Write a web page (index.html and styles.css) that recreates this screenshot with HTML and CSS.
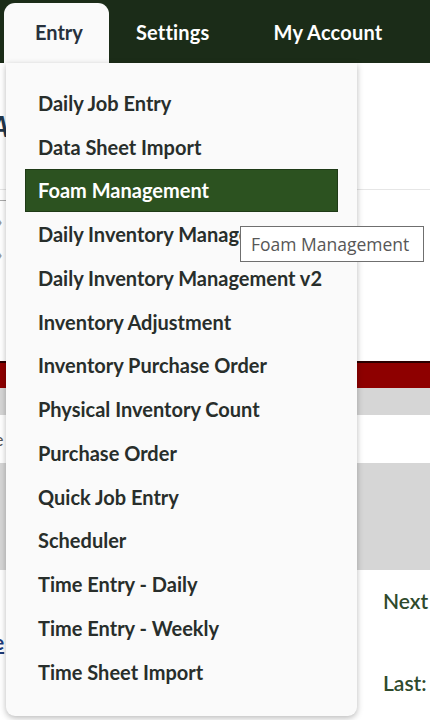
FILE: index.html
```html
<!DOCTYPE html>
<html lang="en">
<head>
    <meta charset="UTF-8">
    <meta name="viewport" content="width=device-width, initial-scale=1.0">
    <title>Entry - Foam Management</title>
    <link rel="stylesheet" href="styles.css">
</head>
<body>
    <nav class="topnav">
        <a href="#" class="tab active">Entry</a>
        <a href="#" class="tab">Settings</a>
        <a href="#" class="tab">My Account</a>
    </nav>

    <div class="page">
        <div class="page-head">
            <h2 class="page-title">A</h2>
        </div>
        <div class="filters">
            <span class="rule"></span>
            <span class="chev">&#8250;</span>
            <span class="chev">&#8250;</span>
        </div>
        <div class="band-red"></div>
        <div class="band-gray"></div>
        <div class="row-white"><span class="cut">e</span></div>
        <div class="band-gray tall"></div>
        <div class="summary">
            <div class="summary-row">Next</div>
            <div class="summary-row"><a href="#" class="cut-link">e</a></div>
            <div class="summary-row">Last:</div>
        </div>
    </div>

    <!-- dropdown for the Entry tab -->
    <ul class="dropdown">
        <li><a href="#">Daily Job Entry</a></li>
        <li><a href="#">Data Sheet Import</a></li>
        <li><a href="#" class="hover">Foam Management</a></li>
        <li><a href="#">Daily Inventory Management</a></li>
        <li><a href="#">Daily Inventory Management v2</a></li>
        <li><a href="#">Inventory Adjustment</a></li>
        <li><a href="#">Inventory Purchase Order</a></li>
        <li><a href="#">Physical Inventory Count</a></li>
        <li><a href="#">Purchase Order</a></li>
        <li><a href="#">Quick Job Entry</a></li>
        <li><a href="#">Scheduler</a></li>
        <li><a href="#">Time Entry - Daily</a></li>
        <li><a href="#">Time Entry - Weekly</a></li>
        <li><a href="#">Time Sheet Import</a></li>
    </ul>

    <div class="tooltip">Foam Management</div>
</body>
</html>
```

FILE: styles.css
```css
* {
    box-sizing: border-box;
}
body {
    margin: 0;
    font-family: Lato, "Open Sans", sans-serif;
    background-color: #fff;
    width: 430px;
    height: 720px;
    overflow: hidden;
    position: relative;
}
.topnav {
    display: flex;
    align-items: flex-end;
    height: 63px;
    background-color: #1b2c18;
    padding-left: 4px;
}
.tab {
    height: 60px;
    display: flex;
    align-items: center;
    padding: 0 37px 3px 27px;
    color: #fff;
    font-weight: bold;
    font-size: 20px;
    letter-spacing: 0.2px;
    text-decoration: none;
}
.tab.active {
    background-color: #fafafa;
    color: #27313d;
    border-radius: 11px 11px 0 0;
    padding: 0 26px 3px 31px;
    letter-spacing: 0;
}
.page-head {
    height: 127px;
    border-bottom: 1px solid #e6e6e6;
    display: flex;
    align-items: center;
}
.page-title {
    margin: 0 0 0 -9px;
    font-size: 28px;
    color: #22364a;
    font-style: italic;
}
.filters {
    height: 171px;
    display: flex;
    flex-direction: column;
    padding-top: 10px;
    gap: 4px;
}
.rule {
    width: 6px;
    border-top: 1px solid #aaa;
}
.chev {
    color: #999;
    font-size: 24px;
    margin-left: -4px;
}
.band-red {
    height: 27px;
    background-color: #8e0000;
    border-top: 2px solid #2a0000;
}
.band-gray {
    height: 27px;
    background-color: #d6d6d6;
}
.band-gray.tall {
    height: 107px;
}
.row-white {
    height: 48px;
    display: flex;
    align-items: center;
}
.cut {
    margin-left: -6px;
    color: #555;
    font-size: 18px;
}
.summary {
    padding-top: 10px;
}
.summary-row {
    height: 41px;
    padding-left: 383px;
    color: #2f4a2c;
    font-size: 21px;
    font-weight: 600;
    display: flex;
    align-items: center;
    position: relative;
}
.cut-link {
    position: absolute;
    left: -7px;
    color: #1d3b7a;
    font-weight: bold;
}
.dropdown {
    position: absolute;
    top: 63px;
    left: 6px;
    width: 351px;
    margin: 0;
    padding: 18px 19px 22px;
    list-style: none;
    background-color: #fafafa;
    border-radius: 0 0 9px 9px;
    box-shadow: 0 2px 6px rgba(0, 0, 0, 0.28);
}
.dropdown a {
    display: flex;
    align-items: center;
    height: 43.75px;
    padding-left: 13px;
    color: #282e2b;
    font-size: 20px;
    font-weight: bold;
    text-decoration: none;
}
.dropdown a.hover {
    background-color: #2c5220;
    color: #fff;
    border: 1px solid #1f3a17;
    padding-left: 12px;
}
.tooltip {
    position: absolute;
    top: 226px;
    left: 240px;
    width: 184px;
    height: 36px;
    padding-left: 10px;
    display: flex;
    align-items: center;
    background-color: #fff;
    border: 1px solid #6f6f6f;
    color: #575757;
    font-size: 17.5px;
    font-family: "Open Sans", sans-serif;
    white-space: nowrap;
}
```
